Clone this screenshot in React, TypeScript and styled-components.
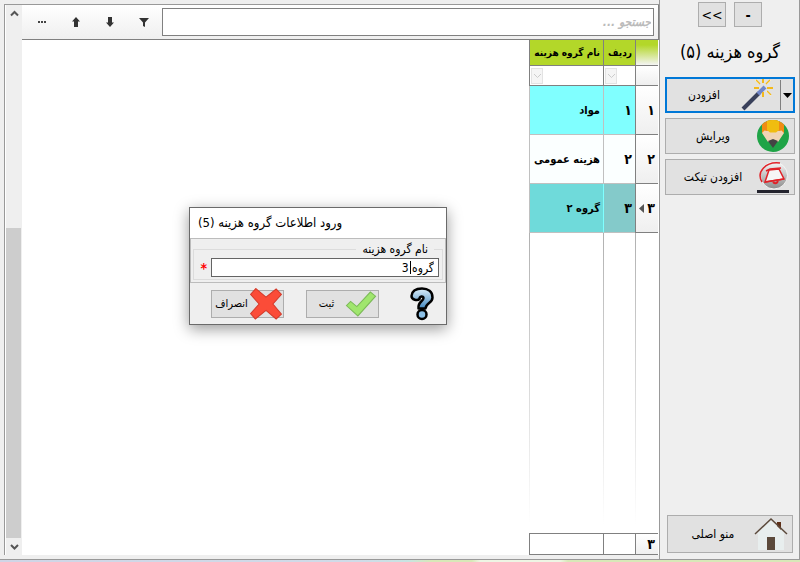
import React from 'react';
import styled, { createGlobalStyle } from 'styled-components';

const GlobalStyle = createGlobalStyle`
  * { box-sizing: border-box; }
  body { margin: 0; background: #efefef; font: 12px "DejaVu Sans Condensed", "DejaVu Sans", sans-serif; color: #000; }
  button, input { font: inherit; color: inherit; }
`;

const Window = styled.div`
  display: flex;
  flex-direction: column;
  height: 100vh;
  position: relative;
`;
const Body = styled.div`
  flex: 1;
  min-height: 0;
  display: flex;
  border-bottom: 1px solid #999;
`;
const Strip = styled.div`
  height: 2px;
  background: linear-gradient(90deg, #d0d5e6 0%, #d0dbe8 45%, #c8e4e2 51%, #d8e8b8 54%, #d8e8b8 59%, #eef5e4 60%, #eef5e4 70%, #d8e8b8 71%);
`;
const Main = styled.main`
  flex: 1;
  min-width: 0;
  display: flex;
  margin: 4px 0 4px 4px;
  border: 1px solid #999;
  border-width: 1px 0 0 1px;
  background: #fff;
`;
const ScrollBar = styled.div`
  width: 17px;
  display: flex;
  flex-direction: column;
  background: #efefef;
  border-left: 1px solid #fff;
`;
const ScrollButton = styled.button`
  height: 17px;
  padding: 0;
  border: 0;
  background: none;
  display: flex;
  align-items: center;
  justify-content: center;
`;
const ScrollTrack = styled.div`
  flex: 1;
  display: flex;
  flex-direction: column;
  justify-content: flex-end;
`;
const ScrollThumb = styled.div`
  height: 60%;
  width: 15px;
  background: #cdcdcd;
`;
const Content = styled.div`
  flex: 1;
  min-width: 0;
  display: flex;
  flex-direction: column;
`;
const Toolbar = styled.div`
  height: 35px;
  display: flex;
  align-items: center;
  padding: 0 4px 0 3px;
  border-bottom: 1px solid #808080;
  border-right: 1px solid #808080;
  background: linear-gradient(#fff, #efefef);
`;
const ToolButton = styled.button`
  width: 34px;
  height: 28px;
  padding: 0;
  border: 0;
  background: none;
  display: flex;
  align-items: center;
  justify-content: center;
`;
const Search = styled.input`
  flex: 1;
  min-width: 0;
  height: 28px;
  margin-left: 1px;
  padding: 0 2px;
  border: 1px solid #808080;
  background: #fff;
  outline: 0;
  font-size: 12px;
  font-style: italic;
  font-weight: bold;
  &::placeholder { color: #bbb; opacity: 1; }
`;
const GridArea = styled.div`
  flex: 1;
  direction: rtl;
  display: flex;
  flex-direction: column;
  width: 129px;
  margin: 0 1px 0 auto;
`;
const Table = styled.table`
  width: 100%;
  table-layout: fixed;
  border-collapse: separate;
  border-spacing: 0;
  font-weight: bold;
`;
const HeadCell = styled.th`
  height: 26px;
  padding: 0 3px;
  text-align: right;
  white-space: nowrap;
  font-size: 10px;
  background: #b3d729;
  border-left: 1px solid #808080;
  border-bottom: 1px solid #808080;
`;
const CornerCell = styled(HeadCell)`
  background: linear-gradient(#b3d729 20%, #f4f4f4);
`;
const FilterCell = styled.td`
  height: 20px;
  padding: 0 0 0 2px;
  direction: ltr;
  border-left: 1px solid #808080;
  border-bottom: 1px solid #808080;
`;
const FilterCorner = styled(FilterCell)`
  background: linear-gradient(#fff, #efefef);
`;
const FilterButton = styled.button`
  display: flex;
  align-items: center;
  justify-content: center;
  width: 12px;
  height: 16px;
  padding: 0;
  border: 1px solid #e3e3e3;
  background: #f5f5f5;
`;
const Cell = styled.td<{ $bg: string; $line?: string; $number?: boolean }>`
  height: 49px;
  padding: 0 3px;
  white-space: nowrap;
  font-size: ${(p) => (p.$number ? 14 : 11)}px;
  background: ${(p) => p.$bg};
  border-left: 1px solid ${(p) => p.$line || '#c0c0c0'};
  border-bottom: 1px solid #c0c0c0;
`;
const RowHead = styled.th`
  height: 49px;
  padding: 0 3px;
  text-align: right;
  white-space: nowrap;
  font-size: 14px;
  background: linear-gradient(#fff, #efefef);
  border-left: 1px solid #808080;
  border-bottom: 1px solid #808080;
`;
const RowMark = styled.span`
  display: flex;
  align-items: center;
  justify-content: space-between;
`;
const Filler = styled.div`
  flex: 1;
  display: flex;
`;
const FillerColumn = styled.div<{ $width?: number }>`
  flex: ${(p) => (p.$width ? `0 0 ${p.$width}px` : '1')};
  border-left: 1px solid;
  border-image: linear-gradient(#b0b0b0, #fff 97%) 1;
`;
const FootCell = styled.td`
  height: 22px;
  padding: 0 3px;
  font-size: 14px;
  line-height: 16px;
  border: 1px solid #808080;
  border-right: 0;
`;
const FootHead = styled(FootCell)`
  background: linear-gradient(#fff, #efefef);
`;
const Side = styled.aside`
  width: 141px;
  display: flex;
  flex-direction: column;
  gap: 5px;
  padding: 2px 4px 6px 5px;
  border-left: 1px solid #999;
  border-right: 1px solid #999;
  direction: rtl;
`;
const SmallButtons = styled.div`
  display: flex;
  direction: ltr;
  justify-content: center;
  gap: 8px;
`;
const SmallButton = styled.button`
  width: 28px;
  height: 25px;
  padding: 0;
  border: 1px solid #adadad;
  background: #e1e1e1;
  font-size: 14px;
`;
const Title = styled.h1`
  height: 40px;
  margin: 0;
  line-height: 40px;
  text-align: center;
  white-space: nowrap;
  font-size: 18px;
  font-weight: normal;
`;
const Action = styled.button<{ $active?: boolean }>`
  height: 36px;
  padding: ${(p) => (p.$active ? '0' : '0 4px')};
  display: flex;
  align-items: center;
  border: ${(p) => (p.$active ? '2px solid #0078d7' : '1px solid #adadad')};
  background: #e1e1e1;
`;
const ActionLabel = styled.span`
  flex: 1;
  text-align: center;
  white-space: nowrap;
`;
const SplitArrow = styled.span`
  width: 13px;
  height: 30px;
  margin-left: 5px;
  display: flex;
  align-items: center;
  justify-content: center;
  border-left: 1px solid #808080;
`;
const Home = styled(Action)`
  height: 38px;
  margin: auto 2px 0 2px;
`;
const Dialog = styled.form`
  position: absolute;
  left: 189px;
  top: 207px;
  width: 258px;
  direction: rtl;
  border: 1px solid #6a6a6a;
  background: #efefef;
  box-shadow: 0 4px 14px rgba(0, 0, 0, 0.4);
`;
const DialogTitle = styled.h2`
  height: 30px;
  margin: 0;
  padding: 0 8px;
  text-align: left;
  line-height: 30px;
  font-size: 13px;
  font-weight: normal;
  background: #fff;
`;
const Panel = styled.div`
  padding: 3px 2px 2px;
  border: 1px solid #bcbcbc;
`;
const Group = styled.fieldset`
  margin: 0;
  padding: 2px 3px;
  border: 1px solid #dcdcdc;
  min-width: 0;
`;
const Legend = styled.legend`
  margin-right: 5px;
  padding: 0 6px;
  line-height: 14px;
`;
const FieldRow = styled.div`
  display: flex;
  align-items: center;
  gap: 4px;
`;
const FieldBox = styled.div`
  flex: 1;
  min-width: 0;
  display: flex;
  position: relative;
`;
const Field = styled.input`
  flex: 1;
  min-width: 0;
  height: 19px;
  padding: 0 4px;
  border: 1px solid #646464;
  background: #fff;
  outline: 0;
`;
const Caret = styled.span`
  position: absolute;
  top: 3px;
  right: 28px;
  width: 1px;
  height: 13px;
  background: #000;
`;
const Star = styled.span`
  width: 10px;
  color: #f00;
  font-size: 14px;
  line-height: 16px;
  font-weight: bold;
`;
const Buttons = styled.div`
  height: 41px;
  padding: 0 12px 0 21px;
  display: flex;
  align-items: center;
  gap: 22px;
`;
const HelpButton = styled.button`
  margin-left: auto;
  padding: 0;
  border: 0;
  background: none;
  display: flex;
`;
const DialogButton = styled.button`
  width: 73px;
  height: 28px;
  padding: 0 1px;
  display: flex;
  align-items: center;
  border: 1px solid #adadad;
  background: #e1e1e1;
  font-size: 11px;
`;

const Chevron = ({ up = false, light = false }: { up?: boolean; light?: boolean }) => (
  <svg width="9" height="9" viewBox="0 0 9 9" fill="none" stroke={light ? '#ccc' : '#555'} strokeWidth={light ? 1 : 2}>
    <path d={up ? 'M1 6.5 4.5 3 8 6.5' : 'M1 3 4.5 6.5 8 3'} />
  </svg>
);
const Arrow = ({ up = false }: { up?: boolean }) => (
  <svg width="10" height="10" viewBox="0 0 10 10" fill="#333">
    <path d={up ? 'M5 0 9 4.5H7V10H3V4.5H1Z' : 'M5 10 9 5.5H7V0H3V5.5H1Z'} />
  </svg>
);
const Wand = () => (
  <svg width="34" height="32" viewBox="0 0 34 32">
    <path d="m2 30 16-16" stroke="#39405a" strokeWidth="4" />
    <path d="m17 15 7-7" stroke="#7186c8" strokeWidth="4" />
    <path d="m14 1 4 4M30 1l-4 4M25 12l5 5" stroke="#fff" />
    <path d="M22 0v4M13 9h5M26 9h6M22 13v5" stroke="#f3b91c" strokeWidth="2" />
    <path d="m15 1 4 4M29 1l-4 4M26 12l4 4" stroke="#f3b91c" strokeWidth="1.5" />
  </svg>
);
const Pencil = () => (
  <svg width="34" height="34" viewBox="0 0 34 34">
    <defs><clipPath id="round"><circle cx="17" cy="17" r="16" /></clipPath></defs>
    <g clipPath="url(#round)">
      <path d="M0 0h34v34H0Z" fill="#1fa447" />
      <path d="M6 0h22v14H6Z" fill="#f08b13" />
      <path d="M6 14 8.500 11.500 11 12q6-3 12 0l2.500-.5L28 14l-6 9H12Z" fill="#f0d4b4" />
      <path d="M11 0h12v11l-3 2.500h-6L11 11Z" fill="#f0bd10" />
      <path d="m12 22 5-2 5 2-5 7Z" fill="#444" />
    </g>
  </svg>
);
const Ticket = () => (
  <svg width="34" height="34" viewBox="0 0 34 34">
    <defs>
      <linearGradient id="disc" x2="0" y2="1">
        <stop stopColor="#f8f8f8" />
        <stop offset="1" stopColor="#8c8c8c" />
      </linearGradient>
    </defs>
    <circle cx="18" cy="15.5" r="13.500" fill="url(#disc)" stroke="#f4f4f4" />
    <path d="M6 22C0 12 10 1 24 3" fill="none" stroke="#e02228" strokeWidth="1.5" />
    <path d="m13 10 10-1 5 10-19 3Z" fill="#f6f6f6" stroke="#e02228" strokeWidth="1.5" />
    <path d="m10 11 4-2 11-1M9 22l19-3" fill="none" stroke="#e02228" strokeWidth="1.5" />
    <path d="M17 22q3 3 5-1" fill="none" stroke="#e02228" strokeWidth="2" />
    <path d="M1 31.500h32" stroke="#24242e" strokeWidth="3" />
  </svg>
);
const House = () => (
  <svg width="34" height="34" viewBox="0 0 34 34">
    <path d="M23 5h4v8h-4Z" fill="#5e3018" />
    <path d="M17 3 4 16v17h26V16Z" fill="#e8eeee" />
    <path d="m1 17 16-15 16 15" fill="none" stroke="#5b4a3c" strokeWidth="1.5" />
    <path d="M13 20h8v13h-8Z" fill="#5b4a3c" />
  </svg>
);
const Tick = () => (
  <svg width="32" height="26" viewBox="0 0 30 25">
    <path d="m1 14 4-4 6 5L24 1l5 4-17 19Z" fill="#a0e66e" stroke="#7cba58" />
  </svg>
);
const Cross = () => (
  <svg width="32" height="32" viewBox="0 0 30 30">
    <path d="m5.500.5 9.500 8 9.500-7.500 5 5-8 9 8 9.500-5 4.500-9.500-8-10 8L.5 24l8-9-8-9Z" fill="#fb4c38" stroke="#d43c2c" />
  </svg>
);
const Help = () => (
  <svg width="24" height="34" viewBox="0 0 24 34">
    <defs>
      <linearGradient id="blue" x2="0" y2="1">
        <stop stopColor="#dceffb" />
        <stop offset="1" stopColor="#4388bf" />
      </linearGradient>
    </defs>
    <path d="M1.500 9C2 4 6 1.500 12 1.500S22.500 4.500 22.500 10.500c0 6-6.500 5-7 11H8.500c-1-7 5-7 5-10.500 0-2.500-4-2-4 1-2 2-8 1-8-3Z" fill="url(#blue)" stroke="#000" strokeWidth="2.5" strokeLinejoin="round" />
    <circle cx="12" cy="27.500" r="4.500" fill="#8cc0e6" stroke="#000" strokeWidth="2.500" />
  </svg>
);

const Columns = () => (
  <colgroup>
    <col width="23" />
    <col width="32" />
    <col />
  </colgroup>
);

const rows = [
  { no: '۱', name: 'مواد', bg: '#80ffff', selected: false },
  { no: '۲', name: 'هزینه عمومی', bg: '#fbffff', selected: false },
  { no: '۳', name: 'گروه ۲', bg: '#6fdada', selected: true },
];

export default function App() {
  return (
    <Window>
      <GlobalStyle />
      <Body>
        <Main>
          <ScrollBar>
            <ScrollButton aria-label="بالا"><Chevron up /></ScrollButton>
            <ScrollTrack><ScrollThumb /></ScrollTrack>
            <ScrollButton aria-label="پایین"><Chevron /></ScrollButton>
          </ScrollBar>
          <Content>
            <Toolbar>
              <ToolButton aria-label="بیشتر">
                <svg width="9" height="2" fill="#444"><path d="M0 0h2v2H0zM3 0h2v2H3zM6 0h2v2H6z" /></svg>
              </ToolButton>
              <ToolButton aria-label="قبلی"><Arrow up /></ToolButton>
              <ToolButton aria-label="بعدی"><Arrow /></ToolButton>
              <ToolButton aria-label="فیلتر">
                <svg width="10" height="9" viewBox="0 0 10 9" fill="#333"><path d="M0 0h10L6 4.500V9L4 8V4.500Z" /></svg>
              </ToolButton>
              <Search dir="rtl" placeholder="جستجو ..." aria-label="جستجو" />
            </Toolbar>
            <GridArea>
              <Table>
                <Columns />
                <thead>
                  <tr><CornerCell /><HeadCell>ردیف</HeadCell><HeadCell>نام گروه هزینه</HeadCell></tr>
                </thead>
                <tbody>
                  <tr>
                    <FilterCorner />
                    <FilterCell><FilterButton aria-label="فیلتر ردیف"><Chevron light /></FilterButton></FilterCell>
                    <FilterCell><FilterButton aria-label="فیلتر نام"><Chevron light /></FilterButton></FilterCell>
                  </tr>
                  {rows.map((r) => (
                    <tr key={r.no}>
                      <RowHead>
                        <RowMark>
                          {r.no}
                          {r.selected && <svg width="5" height="9" fill="#555"><path d="M5 0v9L0 4.500Z" /></svg>}
                        </RowMark>
                      </RowHead>
                      <Cell $number $bg={r.selected ? '#84caca' : r.bg} $line={r.selected ? '#80ffff' : undefined}>{r.no}</Cell>
                      <Cell $bg={r.bg}>{r.name}</Cell>
                    </tr>
                  ))}
                </tbody>
              </Table>
              <Filler>
                <FillerColumn $width={23} />
                <FillerColumn $width={32} />
                <FillerColumn />
              </Filler>
              <Table>
                <Columns />
                <tbody><tr><FootHead>۳</FootHead><FootCell /><FootCell /></tr></tbody>
              </Table>
            </GridArea>
          </Content>
        </Main>
        <Side>
          <SmallButtons>
            <SmallButton>&lt;&lt;</SmallButton>
            <SmallButton><b>-</b></SmallButton>
          </SmallButtons>
          <Title>گروه هزینه (۵)</Title>
          <Action $active>
            <SplitArrow><svg width="9" height="5"><path d="M0 0h9L4.500 5Z" /></svg></SplitArrow>
            <Wand />
            <ActionLabel>افزودن</ActionLabel>
          </Action>
          <Action><Pencil /><ActionLabel>ویرایش</ActionLabel></Action>
          <Action><Ticket /><ActionLabel>افزودن تیکت</ActionLabel></Action>
          <Home><House /><ActionLabel>منو اصلی</ActionLabel></Home>
        </Side>
      </Body>
      <Strip />
      <Dialog role="dialog" aria-labelledby="dialog-title">
        <DialogTitle id="dialog-title">ورود اطلاعات گروه هزینه (5)</DialogTitle>
        <Panel>
          <Group>
            <Legend><label htmlFor="group-name">نام گروه هزینه</label></Legend>
            <FieldRow>
              <FieldBox>
                <Field id="group-name" defaultValue="گروه 3" />
                <Caret />
              </FieldBox>
              <Star>*</Star>
            </FieldRow>
          </Group>
        </Panel>
        <Buttons>
          <HelpButton type="button" aria-label="راهنما"><Help /></HelpButton>
          <DialogButton type="button"><Tick /><ActionLabel>ثبت</ActionLabel></DialogButton>
          <DialogButton type="button"><Cross /><ActionLabel>انصراف</ActionLabel></DialogButton>
        </Buttons>
      </Dialog>
    </Window>
  );
}
